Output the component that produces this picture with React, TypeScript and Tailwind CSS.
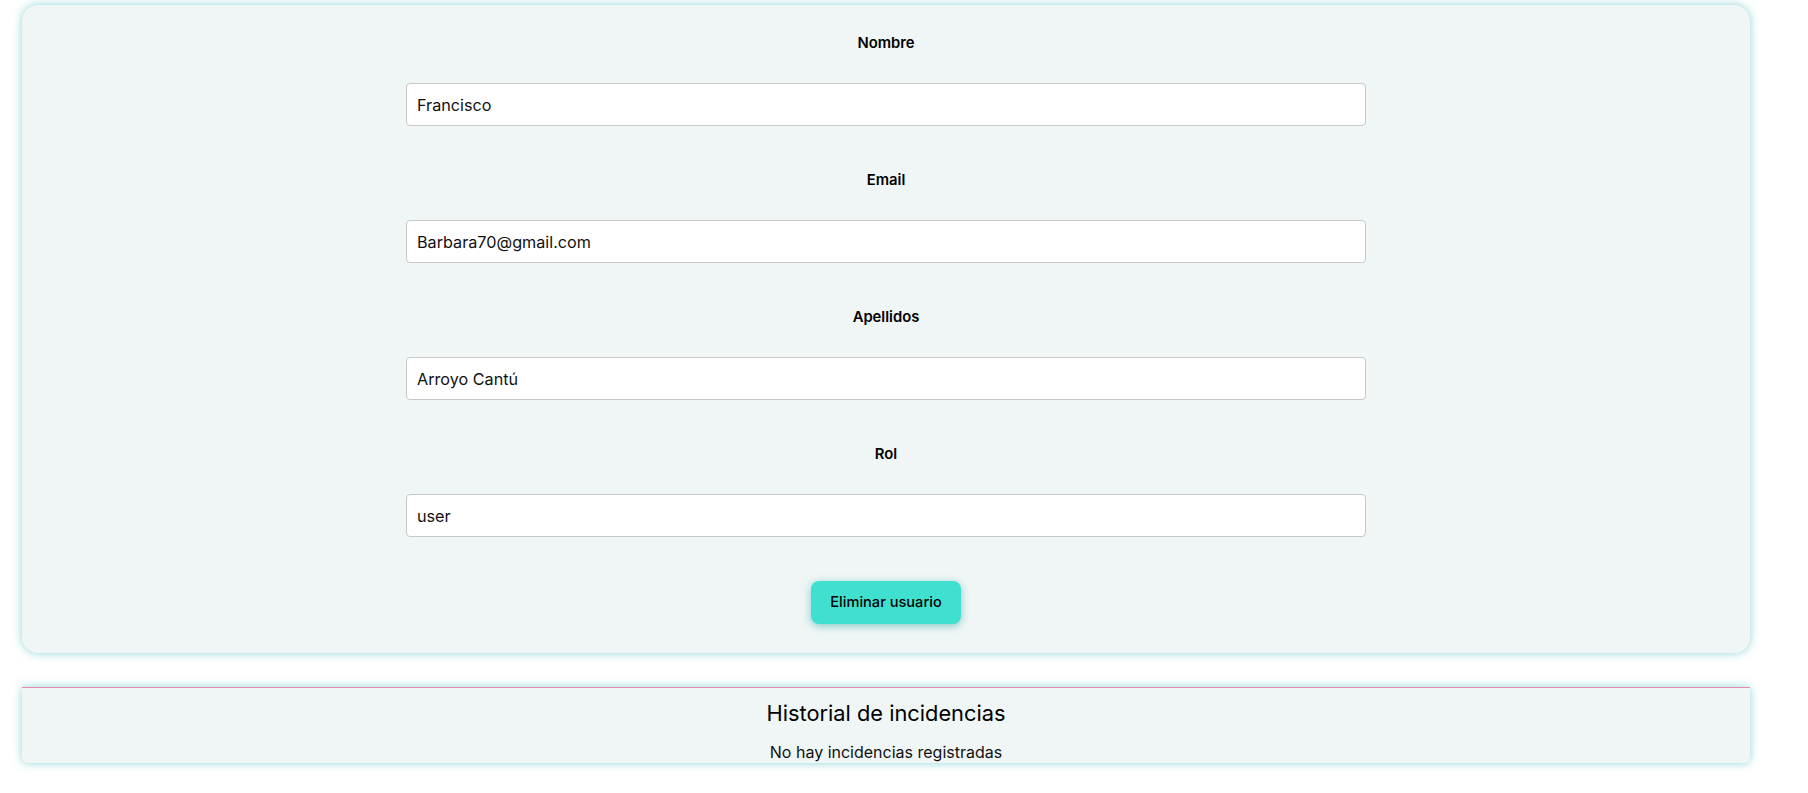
const fields = [
  { label: "Nombre", value: "Francisco" },
  { label: "Email", value: "Barbara70@gmail.com" },
  { label: "Apellidos", value: "Arroyo Cantú" },
  { label: "Rol", value: "user" },
];

const App = () => {
  return (
    <div className="min-h-screen bg-white pt-[5px] font-['Inter',sans-serif] text-[#111]">
      <section className="ml-[22px] w-[1728px] rounded-[16px] bg-[#f0f6f6] pt-[28px] pb-[29px] shadow-[0_0_10px_rgba(70,185,185,0.6)]">
        <form className="flex flex-col items-center gap-[44px]">
          {fields.map((f) => (
            <div key={f.label} className="flex flex-col items-center">
              <label className="h-[20px] text-[14.8px] leading-[20px] font-semibold text-black">
                {f.label}
              </label>
              <input
                readOnly
                value={f.value}
                className="mt-[30px] h-[43px] w-[960px] rounded-[4px] border border-[#c8c8c8] bg-white px-[10px] text-[16.2px] text-[#111] outline-none"
              />
            </div>
          ))}
          <button
            type="button"
            className="h-[43px] w-[150px] rounded-[8px] bg-[#40e0d0] text-[14.6px] font-medium text-black shadow-[0_2px_8px_rgba(60,170,170,0.6)]"
          >
            Eliminar usuario
          </button>
        </form>
      </section>

      <section className="mt-[34px] ml-[22px] h-[76px] w-[1728px] overflow-hidden rounded-b-[6px] border-t border-[#e38bac] bg-[#f0f6f6] pt-[11px] text-center shadow-[0_0_10px_rgba(70,185,185,0.6)]">
        <h2 className="text-[21.8px] leading-[28px] text-black">Historial de incidencias</h2>
        <p className="mt-[14px] text-[16px] leading-[22px]">No hay incidencias registradas</p>
      </section>
    </div>
  );
};

export default App;
